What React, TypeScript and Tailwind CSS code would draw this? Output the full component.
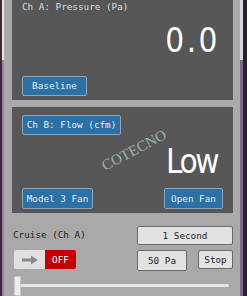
import React from 'react';

const mono = { fontFamily: '"DejaVu Sans Mono", "Liberation Mono", monospace' };
const big = { fontFamily: '"DejaVu Sans Condensed", "DejaVu Sans", sans-serif' };

function BlueButton({ label, className = '' }: { label: string; className?: string }) {
  return (
    <div
      style={mono}
      className={`flex items-center justify-center rounded-[2px] border border-[#8fa6b8] bg-[#2b70a6] text-[9.3px] text-[#e6eef5] ${className}`}
    >
      {label}
    </div>
  );
}

function GrayButton({ label, className = '' }: { label: string; className?: string }) {
  return (
    <div
      style={mono}
      className={`flex items-center justify-center rounded-[2px] border border-[#6a6a6a] bg-[#e2e2e2] text-[9.3px] text-[#222] ${className}`}
    >
      {label}
    </div>
  );
}

export default function App() {
  return (
    <div className="flex h-[296px] w-[247px] overflow-hidden">
      {/* desktop edge, left */}
      <div className="flex w-[4px] shrink-0">
        <div className="w-[2px] bg-[#3a2a2c]" />
        <div className="flex w-[2px] flex-col bg-[#9a80b0]">
          <div className="h-[60px] bg-[#e8e4ee]" />
        </div>
      </div>

      {/* window body */}
      <div className="flex w-[236px] shrink-0 flex-col bg-[#a9a9a9] pl-[8px] pr-[7px]">
        {/* Channel A */}
        <div className="flex h-[100px] flex-col bg-[#575757] px-[10px] pb-[4px]">
          <div style={mono} className="pt-[1px] text-[9.3px] leading-[11px] text-[#dcdcdc]">
            Ch A: Pressure (Pa)
          </div>
          <div className="flex flex-1 items-start justify-end pr-[3px] pt-[12px]">
            <span style={big} className="text-[33px] leading-[34px] tracking-[2.5px] text-white">
              0.0
            </span>
          </div>
          <BlueButton label="Baseline" className="h-[20px] w-[65px]" />
        </div>

        {/* Channel B */}
        <div className="relative mt-[7px] flex h-[106px] flex-col bg-[#575757] px-[10px] pb-[4px] pt-[8px]">
          <BlueButton label="Ch B: Flow (cfm)" className="h-[20px] w-[99px]" />
          <div className="flex flex-1 items-center justify-end pr-[6px]">
            <span style={big} className="text-[33px] leading-[34px] tracking-[-2.5px] text-white">
              Low
            </span>
          </div>
          <div className="flex items-end justify-between">
            <BlueButton label="Model 3 Fan" className="h-[21px] w-[71px]" />
            <BlueButton label="Open Fan" className="h-[21px] w-[59px]" />
          </div>
          <div
            className="pointer-events-none absolute left-[122px] top-[43px] -translate-x-1/2 -translate-y-1/2 rotate-[-28deg] whitespace-nowrap text-[15px] leading-[16px] text-[#9fb3a6]"
            style={{ fontFamily: '"Liberation Serif", serif' }}
          >
            COTECNO
          </div>
        </div>

        {/* Cruise controls */}
        <div className="mt-[13px] flex items-start justify-between pl-[1px]">
          <div style={mono} className="pt-[3px] text-[9.3px] leading-[11px] text-[#222]">
            Cruise (Ch A)
          </div>
          <GrayButton label="1 Second" className="h-[19px] w-[96px]" />
        </div>
        <div className="mt-[5px] flex items-start pl-[2px]">
          <div className="flex h-[19px] w-[62px] overflow-hidden rounded-[2px]">
            <div className="flex w-[31px] items-center justify-center bg-[#e0e0e0]">
              <svg width="18" height="10" viewBox="0 0 18 10">
                <rect x="1" y="3.5" width="10" height="3" fill="#8a8a8a" />
                <polygon points="10,0.5 17,5 10,9.5" fill="#8a8a8a" />
              </svg>
            </div>
            <div
              style={mono}
              className="flex flex-1 items-center justify-center bg-[#c40000] text-[9.3px] text-white"
            >
              OFF
            </div>
          </div>
          <GrayButton label="50 Pa" className="ml-[61px] h-[21px] w-[50px]" />
          <GrayButton label="Stop" className="ml-[11px] h-[19px] w-[35px]" />
        </div>

        {/* slider */}
        <div className="relative mt-[5px] h-[20px] pl-[2px]">
          <div className="absolute left-[2px] right-[4px] top-[8px] h-[3px] rounded-full bg-[#e6e6e6]" />
          <div className="absolute left-[2px] top-0 h-[20px] w-[7px] rounded-[1px] border border-[#c8c8c8] bg-[#ececec]" />
        </div>
      </div>

      {/* desktop edge, right */}
      <div className="flex w-[7px] shrink-0">
        <div className="flex w-[3px] flex-col bg-[#7a6a8a]">
          <div className="h-[60px] bg-[#d8d4de]" />
        </div>
        <div className="w-[4px] bg-[#2a1f2a]" />
      </div>
    </div>
  );
}
